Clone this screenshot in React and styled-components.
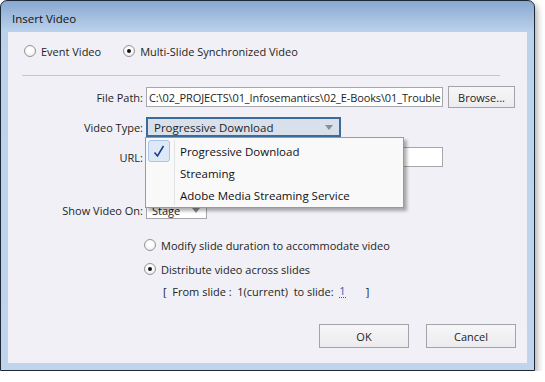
import React from 'react'
import styled, { createGlobalStyle } from 'styled-components'

const GlobalStyle = createGlobalStyle`
  body {
    margin: 0;
    background: #fff;
    font-family: "Open Sans", "Noto Sans", sans-serif;
    font-size: 11px;
    color: #1e1e1e;
  }
`

const Window = styled.div`
  box-sizing: border-box;
  width: 535px;
  height: 371px;
  border: 1px solid #1d2a36;
  border-radius: 7px 7px 0 0;
  background: linear-gradient(#88a8d0 0, #bcd2ec 31px, #c0d4ec 100%);
  padding: 0 7px 7px 7px;
  display: flex;
  flex-direction: column;
  box-shadow: 2px 4px 7px rgba(0, 0, 0, 0.35);
`

const TitleBar = styled.div`
  box-sizing: border-box;
  height: 31px;
  display: flex;
  align-items: center;
  padding: 3px 0 0 4px;
  font-size: 11.5px;
  color: #111;
`

const Client = styled.div`
  flex: 1;
  background: #f0f0f6;
  display: flex;
  flex-direction: column;
`

const RadioRow = styled.div`
  height: 39px;
  display: flex;
  align-items: center;
  padding: 0 0 1px 16px;
  box-sizing: border-box;
  gap: 22px;
`

const RadioLabel = styled.label`
  display: flex;
  align-items: center;
  gap: 5px;
  white-space: nowrap;
`

const RadioCircle = styled.span`
  box-sizing: border-box;
  width: 12px;
  height: 12px;
  border-radius: 50%;
  border: 1px solid #959598;
  background: radial-gradient(circle at 50% 40%, #fff 30%, #e4e4e8 100%);
  display: flex;
  align-items: center;
  justify-content: center;
  &::after {
    content: '';
    width: 4px;
    height: 4px;
    border-radius: 50%;
    background: ${p => (p.checked ? '#151515' : 'transparent')};
  }
`

const Divider = styled.div`
  margin: 4px 0 0 14px;
  width: 478px;
  height: 1px;
  background: #c5c6cc;
`

const Form = styled.div`
  margin-top: 10px;
  display: flex;
  flex-direction: column;
  gap: 8px;
`

const FieldRow = styled.div`
  height: 22px;
  display: flex;
  align-items: center;
  gap: 3px;
  margin-top: ${p => p.$extra || 0}px;
`

const FieldLabel = styled.div`
  width: 135px;
  text-align: right;
  white-space: nowrap;
`

const TextBox = styled.div`
  box-sizing: border-box;
  width: ${p => p.$w}px;
  height: 20px;
  border: 1px solid #a5a7ad;
  background: #fff;
  padding: 0 2px;
  display: flex;
  align-items: center;
  white-space: nowrap;
  overflow: hidden;
  letter-spacing: -0.12px;
`

const Button = styled.button`
  box-sizing: border-box;
  width: ${p => p.$w}px;
  height: ${p => p.$h || 22}px;
  margin-left: ${p => p.$ml || 0}px;
  border: 1px solid #a3a3a8;
  background: linear-gradient(#f6f6f8, #ececf0);
  font-family: inherit;
  font-size: 11px;
  color: #1e1e1e;
  padding: 0;
`

const SelectWrap = styled.div`
  position: relative;
`

const Select = styled.div`
  box-sizing: border-box;
  width: ${p => p.$w}px;
  height: ${p => p.$h}px;
  border: ${p => (p.$focus ? '2px solid #3b6b9a' : '1px solid #a5a7ad')};
  background: ${p => (p.$focus ? '#d8e0eb' : '#fff')};
  display: flex;
  align-items: center;
  justify-content: space-between;
  padding: 0 6px 0 ${p => (p.$focus ? 6 : 5)}px;
  white-space: nowrap;
  font-size: ${p => (p.$focus ? 11.5 : 11)}px;
`

const Arrow = styled.span`
  width: 0;
  height: 0;
  border-left: 4px solid transparent;
  border-right: 4px solid transparent;
  border-top: 5px solid #8a8d92;
`

const Menu = styled.div`
  position: absolute;
  left: -1px;
  top: 100%;
  z-index: 2;
  box-sizing: border-box;
  width: 259px;
  height: 71px;
  padding: 2px 0 3px;
  background: #f9f9f9;
  border: 1px solid #9a9a9a;
  box-shadow: 3px 3px 3px rgba(0, 0, 0, 0.3);
  &::before {
    content: '';
    position: absolute;
    left: 28px;
    top: 2px;
    bottom: 2px;
    width: 1px;
    background: #e2e3e6;
  }
`

const MenuItem = styled.div`
  height: 22px;
  display: flex;
  align-items: center;
  font-size: 11.5px;
  color: #111;
`

const CheckCell = styled.div`
  box-sizing: border-box;
  width: 22px;
  height: 22px;
  margin: 0 10px 0 2px;
  border-radius: 3px;
  border: 1px solid ${p => (p.$on ? '#a8c4e6' : 'transparent')};
  background: ${p => (p.$on ? '#dde9f7' : 'transparent')};
  display: flex;
  align-items: center;
  justify-content: center;
`

const Options = styled.div`
  margin-top: 12px;
  padding-left: 136px;
  display: flex;
  flex-direction: column;
`

const OptionRow = styled.div`
  height: 24px;
  display: flex;
  align-items: center;
`

const RangeText = styled.div`
  height: 20px;
  display: flex;
  align-items: center;
  padding-left: 19px;
  white-space: pre;
`

const SlideLink = styled.span`
  color: #2a5db0;
  border-bottom: 1px dotted #2a5db0;
  line-height: 13px;
`

const Footer = styled.div`
  margin-top: 23px;
  display: flex;
  justify-content: flex-end;
  gap: 17px;
  padding-right: 11px;
`

function Radio({ checked, children }) {
  return (
    <RadioLabel>
      <RadioCircle checked={checked} />
      {children}
    </RadioLabel>
  )
}

export default function App() {
  return (
    <>
      <GlobalStyle />
      <Window>
        <TitleBar>Insert Video</TitleBar>
        <Client>
          <RadioRow>
            <Radio>Event Video</Radio>
            <Radio checked>Multi-Slide Synchronized Video</Radio>
          </RadioRow>
          <Divider />
          <Form>
            <FieldRow>
              <FieldLabel>File Path:</FieldLabel>
              <TextBox $w={297}>C:\02_PROJECTS\01_Infosemantics\02_E-Books\01_Trouble</TextBox>
              <Button $w={67} $ml={2}>Browse...</Button>
            </FieldRow>
            <FieldRow>
              <FieldLabel>Video Type:</FieldLabel>
              <SelectWrap>
                <Select $w={195} $h={20} $focus>
                  Progressive Download
                  <Arrow />
                </Select>
                <Menu>
                  <MenuItem>
                    <CheckCell $on>
                      <svg width="12" height="13" viewBox="0 0 12 13">
                        <path d="M1.5 7.5 L4.5 11 L10.5 1" fill="none" stroke="#1d3f8a" strokeWidth="1.6" />
                      </svg>
                    </CheckCell>
                    Progressive Download
                  </MenuItem>
                  <MenuItem>
                    <CheckCell />
                    Streaming
                  </MenuItem>
                  <MenuItem>
                    <CheckCell />
                    Adobe Media Streaming Service
                  </MenuItem>
                </Menu>
              </SelectWrap>
            </FieldRow>
            <FieldRow>
              <FieldLabel>URL:</FieldLabel>
              <TextBox $w={297} />
            </FieldRow>
            <FieldRow $extra={23}>
              <FieldLabel>Show Video On:</FieldLabel>
              <Select $w={61} $h={18}>
                Stage
                <Arrow />
              </Select>
            </FieldRow>
          </Form>
          <Options>
            <OptionRow>
              <Radio>Modify slide duration to accommodate video</Radio>
            </OptionRow>
            <OptionRow>
              <Radio checked>Distribute video across slides</Radio>
            </OptionRow>
            <RangeText>
              {'[  From slide :  1(current)  to slide:  '}
              <SlideLink>1</SlideLink>
              {'       ]'}
            </RangeText>
          </Options>
          <Footer>
            <Button $w={90} $h={24}>OK</Button>
            <Button $w={90} $h={24}>Cancel</Button>
          </Footer>
        </Client>
      </Window>
    </>
  )
}
